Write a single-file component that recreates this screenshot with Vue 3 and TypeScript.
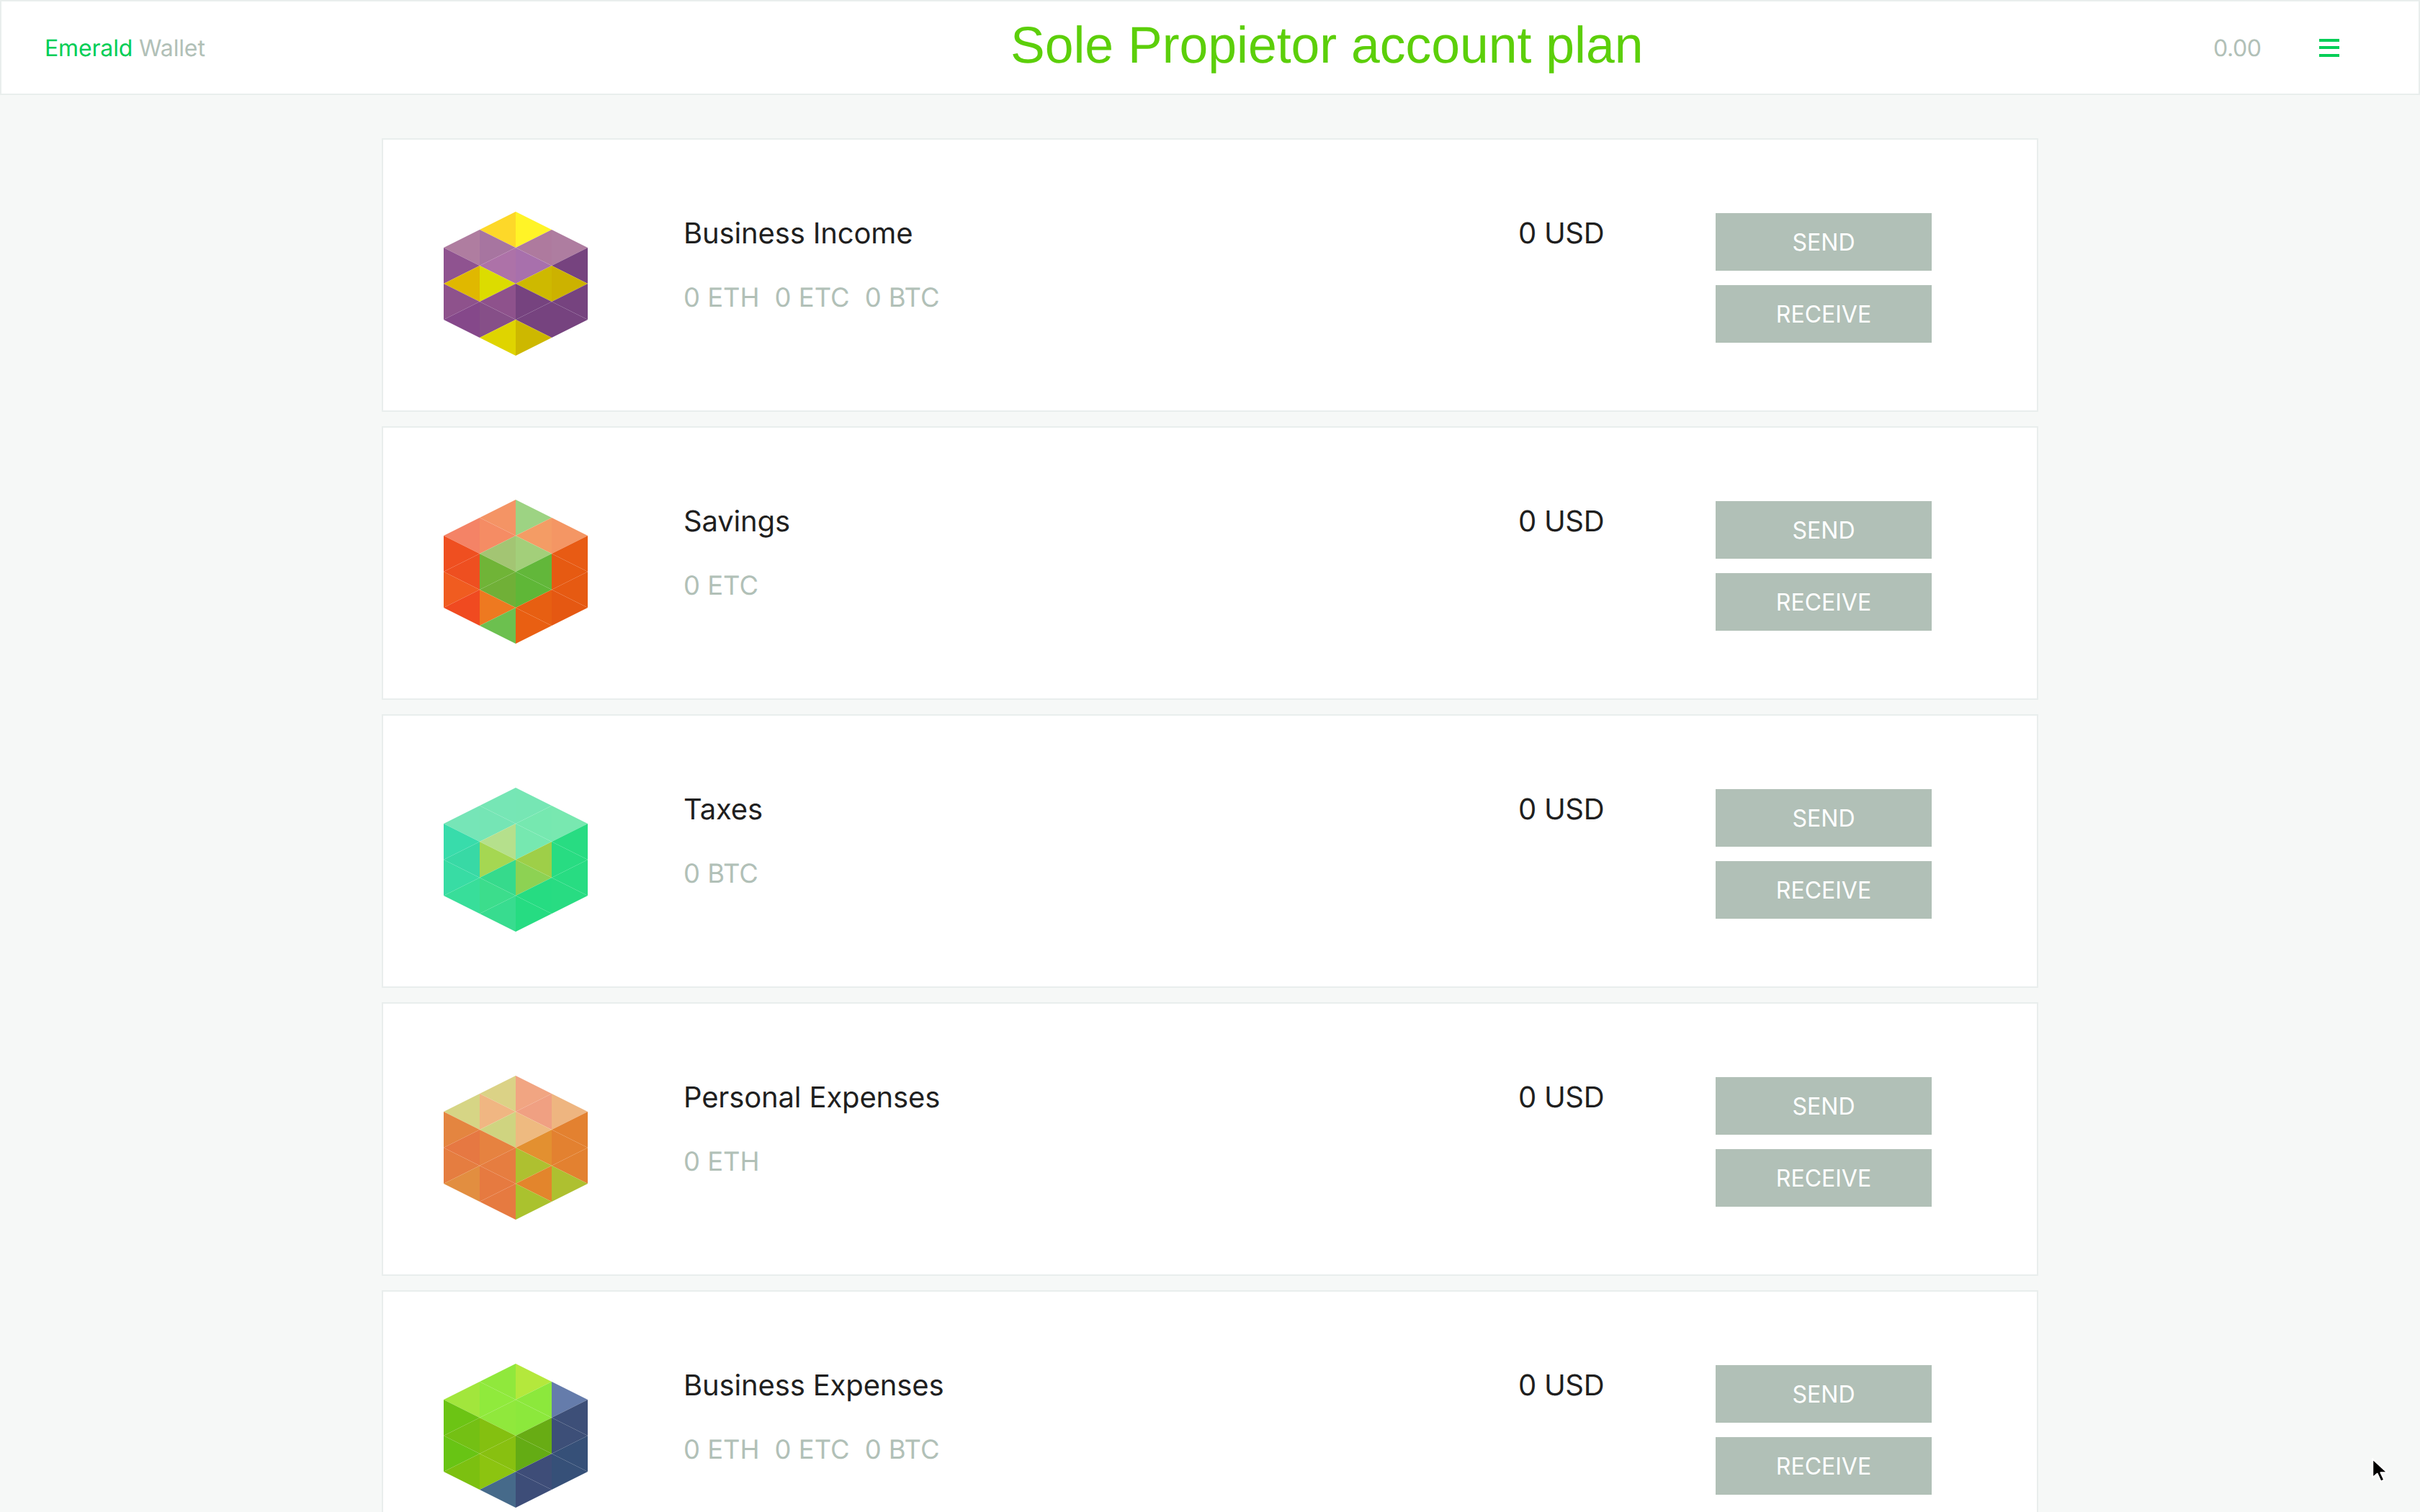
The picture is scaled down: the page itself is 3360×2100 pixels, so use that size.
<script setup lang="ts">
interface Account {
  name: string
  balances: string[]
  colors: string[]
}

const triangles: string[] = [
  '0,50 50,25 50,75', '0,50 50,75 0,100', '0,100 50,75 50,125', '0,100 50,125 0,150', '0,150 50,125 50,175',
  '50,25 100,0 100,50', '50,25 100,50 50,75', '50,75 100,50 100,100', '50,75 100,100 50,125', '50,125 100,100 100,150', '50,125 100,150 50,175', '50,175 100,150 100,200',
  '100,0 150,25 100,50', '100,50 150,25 150,75', '100,50 150,75 100,100', '100,100 150,75 150,125', '100,100 150,125 100,150', '100,150 150,125 150,175', '100,150 150,175 100,200',
  '150,25 200,50 150,75', '150,75 200,50 200,100', '150,75 200,100 150,125', '150,125 200,100 200,150', '150,125 200,150 150,175',
]

const accounts: Account[] = [
  {
    name: 'Business Income',
    balances: ['0 ETH', '0 ETC', '0 BTC'],
    colors: [
      '#af7da0', '#8f5390', '#e0b800', '#8e528c', '#85488a',
      '#fdd829', '#a775a0', '#ad72a8', '#dcdc00', '#8e528c', '#864f88', '#dfd400',
      '#fff427', '#ae7a9e', '#a870ac', '#ceb900', '#76437f', '#76437f', '#cdb800',
      '#ae7da0', '#76437f', '#ccb200', '#76437f', '#76437f',
    ],
  },
  {
    name: 'Savings',
    balances: ['0 ETC'],
    colors: [
      '#f48366', '#ef4f20', '#ee4f20', '#f05c20', '#f04a20',
      '#f49465', '#f58c64', '#a3c573', '#70b437', '#70b037', '#ee7920', '#6cc04f',
      '#9dd383', '#f49c65', '#a3cf7a', '#62b73a', '#5fb737', '#e75f12', '#e95f12',
      '#f49664', '#e85b14', '#e65a12', '#e65a12', '#e55812',
    ],
  },
  {
    name: 'Taxes',
    balances: ['0 BTC'],
    colors: [
      '#76e5b7', '#38dcab', '#38d9a5', '#38dca4', '#38de9a',
      '#76e6b5', '#75e5b5', '#b5e08c', '#a5d752', '#36da8c', '#3cdd8c', '#38dc8f',
      '#76e6b4', '#76e8b0', '#76e8b0', '#9ecf48', '#8dd253', '#26dc82', '#26dc82',
      '#78e8b0', '#28dc82', '#28dc82', '#28dc82', '#28dc82',
    ],
  },
  {
    name: 'Personal Expenses',
    balances: ['0 ETH'],
    colors: [
      '#d6d585', '#e48540', '#e67842', '#e57d40', '#e28e40',
      '#dbd286', '#f0b682', '#cfd480', '#e68240', '#e67d40', '#e67a40', '#e67a40',
      '#f1a582', '#f0a082', '#eeba80', '#e39030', '#aec030', '#e3852c', '#aac22e',
      '#eeb580', '#e38130', '#e38130', '#e38130', '#aec030',
    ],
  },
  {
    name: 'Business Expenses',
    balances: ['0 ETH', '0 ETC', '0 BTC'],
    colors: [
      '#a2e63c', '#6cc414', '#74c014', '#68c414', '#7cc010',
      '#90e83c', '#90ea3c', '#90e83c', '#84c010', '#88c010', '#8cc410', '#466a8a',
      '#b4e83c', '#8ce83c', '#8ce83c', '#68ac14', '#64ac14', '#3e4d78', '#3d4d78',
      '#657cab', '#3d4f78', '#3d4f78', '#365078', '#365078',
    ],
  },
]
</script>

<template>
  <div class="page">
    <header class="header">
      <div class="logo"><span class="logo-green">Emerald</span> <span class="logo-grey">Wallet</span></div>
      <h1 class="title">Sole Propietor account plan</h1>
      <div class="total">0.00</div>
      <div class="burger"><span></span><span></span><span></span></div>
    </header>
    <main class="list">
      <section v-for="account in accounts" :key="account.name" class="card">
        <svg class="hex" viewBox="0 0 200 200" width="200" height="200">
          <polygon v-for="(points, i) in triangles" :key="i" :points="points" :fill="account.colors[i]" />
        </svg>
        <div class="info">
          <div class="name">{{ account.name }}</div>
          <div class="balances">
            <span v-for="balance in account.balances" :key="balance">{{ balance }}</span>
          </div>
        </div>
        <div class="usd">0 USD</div>
        <div class="actions">
          <button class="btn" type="button">SEND</button>
          <button class="btn" type="button">RECEIVE</button>
        </div>
      </section>
    </main>
    <svg class="cursor" viewBox="0 0 24 34" width="26" height="37">
      <path d="M2 2 L2 26 L8 21 L12.5 31 L17 29 L12.5 19.5 L21 19.5 Z" fill="#000" stroke="#fff" stroke-width="2" stroke-linejoin="round" />
    </svg>
  </div>
</template>

<style>
html, body {
  margin: 0;
  background: #f6f8f7;
  overflow: hidden;
  height: 2100px;
}
</style>

<style scoped>
.page {
  width: 3360px;
  height: 2100px;
  overflow: hidden;
  position: relative;
  background: #f6f8f7;
  font-family: Inter, "Liberation Sans", sans-serif;
  text-rendering: geometricPrecision;
}
.header {
  box-sizing: border-box;
  height: 132px;
  display: flex;
  align-items: center;
  padding-left: 60px;
  background: #fff;
  border: 2px solid #e9eeed;
  font-size: 32px;
}
.logo {
  width: 1341px;
  flex: none;
  white-space: pre;
  letter-spacing: -0.15px;
}
.logo-green {
  color: #00ce56;
}
.logo-grey {
  color: #b1c0b7;
}
.title {
  margin: -7px 0 0;
  flex: none;
  width: 1670px;
  font-family: "Liberation Sans", Arial, sans-serif;
  font-size: 71.5px;
  font-weight: 400;
  color: #5ccf0a;
}
.total {
  width: 147px;
  flex: none;
  color: #b1c0b7;
  letter-spacing: -0.4px;
}
.burger {
  width: 28px;
  display: flex;
  flex-direction: column;
  gap: 6.5px;
}
.burger span {
  height: 4px;
  background: #00ce56;
}
.list {
  box-sizing: border-box;
  width: 2300px;
  margin: 60px 0 0 530px;
  display: flex;
  flex-direction: column;
  gap: 20px;
}
.card {
  box-sizing: border-box;
  height: 380px;
  flex: none;
  display: flex;
  align-items: flex-start;
  padding: 100px 0 0 84px;
  background: #fff;
  border: 2px solid #e9eeed;
}
.hex {
  flex: none;
  margin-right: 132px;
}
.info {
  width: 1160px;
  flex: none;
  padding-top: 6px;
  padding-left: 1px;
  box-sizing: border-box;
}
.name {
  font-size: 40px;
  line-height: 48px;
  color: #1f1f1f;
  letter-spacing: -0.15px;
}
.balances {
  margin-top: 41px;
  display: flex;
  gap: 21px;
  font-size: 36.4px;
  line-height: 48px;
  color: #b1c0b7;
}
.usd {
  width: 274px;
  flex: none;
  padding-top: 6px;
  font-size: 40px;
  line-height: 48px;
  color: #1f1f1f;
  letter-spacing: -0.3px;
}
.actions {
  width: 300px;
  flex: none;
  padding-top: 2px;
  display: flex;
  flex-direction: column;
  gap: 20px;
}
.btn {
  height: 80px;
  padding: 0;
  border: none;
  background: #b1c0b7;
  color: #fff;
  font-family: Inter, "Liberation Sans", sans-serif;
  font-size: 32px;
}
.cursor {
  position: absolute;
  left: 3292px;
  top: 2024px;
}
</style>
